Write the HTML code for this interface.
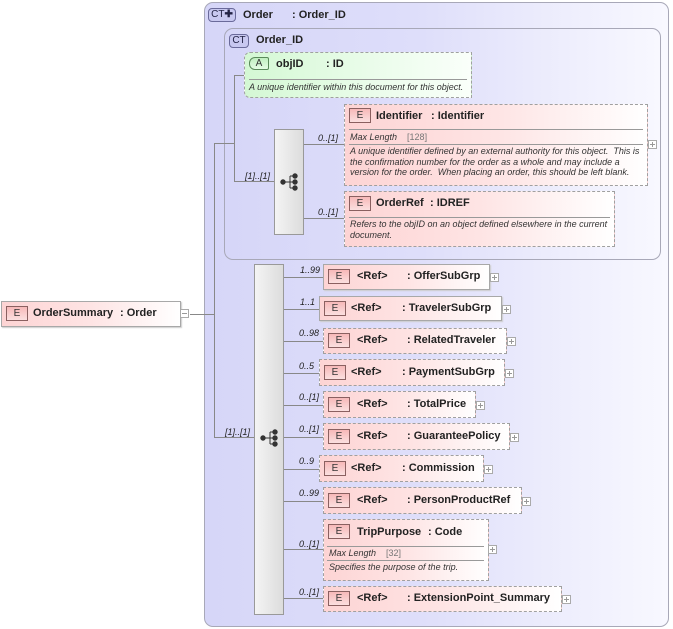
<!DOCTYPE html>
<html><head><meta charset="utf-8"><style>
*{margin:0;padding:0;box-sizing:border-box}
body{width:673px;height:629px;background:#fff;position:relative;overflow:hidden;font-family:"Liberation Sans",sans-serif;color:#000}
.a{position:absolute}
.ct{position:absolute;border:1px solid #a8a8b8;border-radius:9px;background:linear-gradient(to right,#d6d6f8 0%,#dedefa 45%,#efeffd 80%,#f8f8ff 100%)}
.badge{position:absolute;border:1px solid #6a6a9a;border-radius:4px;background:#c8c8f0;font-size:10px;color:#224;text-align:center;line-height:11px}
.el{position:absolute;background:linear-gradient(to right,#fdd4d4 0%,#fee4e4 50%,#fff 100%);border:1px dashed #a0a0a0}
.el.s{border:1px solid #a8a8a8;box-shadow:1px 1px 1px #ccc}
.eb{position:absolute;left:5px;top:4px;width:22px;height:15px;border:1px solid #8a6060;background:linear-gradient(#f7b9b9,#fbe0e0);font-size:10px;text-align:center;line-height:14px;color:#333}
.t{position:absolute;font-size:11px;font-weight:bold;white-space:nowrap;color:#222;margin-top:1px}
.card{position:absolute;font-size:9px;font-style:italic;color:#222;white-space:nowrap}
.ln{position:absolute;background:#888}
.plus{position:absolute;width:9px;height:9px;border:1px solid #aaa;background:#fff}
.plus:before{content:"";position:absolute;left:1px;top:3px;width:5px;height:1px;background:#999}
.plus.p:after{content:"";position:absolute;left:3px;top:1px;width:1px;height:5px;background:#999}
.hr{position:absolute;height:1px;background:#999}
.d{position:absolute;font-size:9px;font-style:italic;color:#333;line-height:10.5px;white-space:nowrap}
.seq{position:absolute;border:1px solid #999;background:linear-gradient(to right,#f4f4f4,#dcdcdc)}
</style></head><body>

<div class="ct" style="left:204px;top:2px;width:465px;height:625px"></div>
<div class="badge" style="left:208px;top:8px;width:28px;height:14px">CT<span style="font-weight:bold">&#10010;</span></div>
<div class="t" style="left:243px;top:8px;font-size:11px">Order</div>
<div class="t" style="left:292px;top:8px">: Order_ID</div>

<div class="ct" style="left:224px;top:28px;width:437px;height:232px"></div>
<div class="badge" style="left:229px;top:34px;width:20px;height:14px">CT</div>
<div class="t" style="left:256px;top:33px">Order_ID</div>

<div class="ln" style="left:214px;top:143px;width:1px;height:295px"></div>
<div class="ln" style="left:214px;top:143px;width:20px;height:1px"></div>
<div class="ln" style="left:234px;top:75px;width:1px;height:107px"></div>
<div class="ln" style="left:234px;top:75px;width:11px;height:1px"></div>
<div class="ln" style="left:234px;top:181px;width:40px;height:1px"></div>
<div class="card" style="left:245px;top:171px">[1]..[1]</div>

<div class="a" style="left:244px;top:52px;width:228px;height:46px;border:1px dashed #a0a0a0;background:linear-gradient(to right,#d4f8d4,#e8fce8 50%,#fafffa);border-radius:6px 0 0 6px"></div>
<div class="a" style="left:249px;top:57px;width:20px;height:13px;border:1px solid #5a8a5a;border-radius:6px 2px 2px 6px;background:linear-gradient(#c0eec0,#e4fce4);font-size:10px;text-align:center;line-height:12px;color:#333">A</div>
<div class="t" style="left:276px;top:57px">objID</div>
<div class="t" style="left:326px;top:57px">: ID</div>
<div class="hr" style="left:249px;top:79px;width:218px"></div>
<div class="d" style="left:249px;top:82px">A unique identifier within this document for this object.</div>

<div class="seq" style="left:274px;top:129px;width:30px;height:106px"></div>
<svg class="a" style="left:280px;top:173px" width="20" height="18"><g fill="#333" stroke="#333"><circle cx="3" cy="9" r="2.2"/><circle cx="15" cy="3" r="2.2"/><circle cx="15" cy="9" r="2.2"/><circle cx="15" cy="15" r="2.2"/><path d="M3 9H10M10 3V15M10 3H15M10 9H15M10 15H15" fill="none" stroke-width="1"/></g></svg>
<div class="ln" style="left:304px;top:144px;width:40px;height:1px"></div>
<div class="card" style="left:318px;top:133px">0..[1]</div>
<div class="ln" style="left:304px;top:218px;width:40px;height:1px"></div>
<div class="card" style="left:318px;top:207px">0..[1]</div>

<div class="el" style="left:344px;top:104px;width:304px;height:82px"></div>
<div class="eb" style="left:349px;top:108px">E</div>
<div class="t" style="left:376px;top:109px">Identifier</div>
<div class="t" style="left:431px;top:109px">: Identifier</div>
<div class="hr" style="left:349px;top:129px;width:294px"></div>
<div class="d" style="left:350px;top:132px">Max Length&nbsp;&nbsp;&nbsp;&nbsp;<span style="font-style:normal;color:#777">[128]</span></div>
<div class="hr" style="left:349px;top:144px;width:294px"></div>
<div class="d" style="left:350px;top:146px">A unique identifier defined by an external authority for this object.&nbsp; This is<br>the confirmation number for the order as a whole and may include a<br>version for the order.&nbsp; When placing an order, this should be left blank.</div>
<div class="plus p" style="left:648px;top:140px"></div>

<div class="el" style="left:344px;top:191px;width:271px;height:56px"></div>
<div class="eb" style="left:349px;top:196px">E</div>
<div class="t" style="left:376px;top:196px">OrderRef</div>
<div class="t" style="left:430px;top:196px">: IDREF</div>
<div class="hr" style="left:349px;top:217px;width:261px"></div>
<div class="d" style="left:350px;top:219px">Refers to the objID on an object defined elsewhere in the current<br>document.</div>

<div class="el s" style="left:1px;top:301px;width:180px;height:26px"></div>
<div class="eb" style="left:6px;top:306px">E</div>
<div class="t" style="left:33px;top:306px">OrderSummary</div>
<div class="t" style="left:120px;top:306px">: Order</div>
<div class="plus" style="left:180px;top:309px"></div>
<div class="ln" style="left:190px;top:314px;width:24px;height:1px"></div>

<div class="ln" style="left:214px;top:437px;width:40px;height:1px"></div>
<div class="card" style="left:225px;top:427px">[1]..[1]</div>
<div class="seq" style="left:254px;top:264px;width:30px;height:351px"></div>
<svg class="a" style="left:260px;top:429px" width="20" height="18"><g fill="#333" stroke="#333"><circle cx="3" cy="9" r="2.2"/><circle cx="15" cy="3" r="2.2"/><circle cx="15" cy="9" r="2.2"/><circle cx="15" cy="15" r="2.2"/><path d="M3 9H10M10 3V15M10 3H15M10 9H15M10 15H15" fill="none" stroke-width="1"/></g></svg>

<div class="ln" style="left:284px;top:277px;width:39px;height:1px"></div><div class="card" style="left:300px;top:265px">1..99</div>
<div class="el s" style="left:323px;top:264px;width:167px;height:26px"></div><div class="eb" style="left:328px;top:269px">E</div>
<div class="t" style="left:357px;top:269px">&lt;Ref&gt;</div><div class="t" style="left:407px;top:269px">: OfferSubGrp</div><div class="plus p" style="left:490px;top:273px"></div>

<div class="ln" style="left:284px;top:309px;width:35px;height:1px"></div><div class="card" style="left:300px;top:297px">1..1</div>
<div class="el s" style="left:319px;top:296px;width:183px;height:25px"></div><div class="eb" style="left:324px;top:301px">E</div>
<div class="t" style="left:351px;top:301px">&lt;Ref&gt;</div><div class="t" style="left:402px;top:301px">: TravelerSubGrp</div><div class="plus p" style="left:502px;top:305px"></div>

<div class="ln" style="left:284px;top:341px;width:39px;height:1px"></div><div class="card" style="left:299px;top:328px">0..98</div>
<div class="el" style="left:323px;top:328px;width:184px;height:26px"></div><div class="eb" style="left:328px;top:333px">E</div>
<div class="t" style="left:357px;top:333px">&lt;Ref&gt;</div><div class="t" style="left:407px;top:333px">: RelatedTraveler</div><div class="plus p" style="left:507px;top:337px"></div>

<div class="ln" style="left:284px;top:373px;width:35px;height:1px"></div><div class="card" style="left:299px;top:361px">0..5</div>
<div class="el" style="left:319px;top:359px;width:186px;height:27px"></div><div class="eb" style="left:324px;top:365px">E</div>
<div class="t" style="left:351px;top:365px">&lt;Ref&gt;</div><div class="t" style="left:402px;top:365px">: PaymentSubGrp</div><div class="plus p" style="left:505px;top:369px"></div>

<div class="ln" style="left:284px;top:405px;width:39px;height:1px"></div><div class="card" style="left:299px;top:392px">0..[1]</div>
<div class="el" style="left:323px;top:391px;width:153px;height:27px"></div><div class="eb" style="left:328px;top:397px">E</div>
<div class="t" style="left:357px;top:397px">&lt;Ref&gt;</div><div class="t" style="left:407px;top:397px">: TotalPrice</div><div class="plus p" style="left:476px;top:401px"></div>

<div class="ln" style="left:284px;top:437px;width:39px;height:1px"></div><div class="card" style="left:299px;top:424px">0..[1]</div>
<div class="el" style="left:323px;top:423px;width:187px;height:27px"></div><div class="eb" style="left:328px;top:429px">E</div>
<div class="t" style="left:357px;top:429px">&lt;Ref&gt;</div><div class="t" style="left:407px;top:429px">: GuaranteePolicy</div><div class="plus p" style="left:510px;top:433px"></div>

<div class="ln" style="left:284px;top:469px;width:35px;height:1px"></div><div class="card" style="left:299px;top:456px">0..9</div>
<div class="el" style="left:319px;top:455px;width:165px;height:27px"></div><div class="eb" style="left:324px;top:461px">E</div>
<div class="t" style="left:351px;top:461px">&lt;Ref&gt;</div><div class="t" style="left:402px;top:461px">: Commission</div><div class="plus p" style="left:484px;top:465px"></div>

<div class="ln" style="left:284px;top:501px;width:39px;height:1px"></div><div class="card" style="left:299px;top:488px">0..99</div>
<div class="el" style="left:323px;top:487px;width:199px;height:27px"></div><div class="eb" style="left:328px;top:493px">E</div>
<div class="t" style="left:357px;top:493px">&lt;Ref&gt;</div><div class="t" style="left:407px;top:493px">: PersonProductRef</div><div class="plus p" style="left:522px;top:497px"></div>

<div class="ln" style="left:284px;top:549px;width:39px;height:1px"></div><div class="card" style="left:299px;top:539px">0..[1]</div>
<div class="el" style="left:323px;top:519px;width:166px;height:62px"></div><div class="eb" style="left:328px;top:524px">E</div>
<div class="t" style="left:357px;top:525px">TripPurpose</div><div class="t" style="left:428px;top:525px">: Code</div>
<div class="hr" style="left:327px;top:546px;width:157px"></div>
<div class="d" style="left:329px;top:548px">Max Length&nbsp;&nbsp;&nbsp;&nbsp;<span style="font-style:normal;color:#777">[32]</span></div>
<div class="hr" style="left:327px;top:560px;width:157px"></div>
<div class="d" style="left:329px;top:562px">Specifies the purpose of the trip.</div>
<div class="plus p" style="left:488px;top:545px"></div>

<div class="ln" style="left:284px;top:598px;width:39px;height:1px"></div><div class="card" style="left:299px;top:587px">0..[1]</div>
<div class="el" style="left:323px;top:586px;width:239px;height:26px"></div><div class="eb" style="left:328px;top:591px">E</div>
<div class="t" style="left:357px;top:591px">&lt;Ref&gt;</div><div class="t" style="left:407px;top:591px">: ExtensionPoint_Summary</div><div class="plus p" style="left:562px;top:595px"></div>

</body></html>
